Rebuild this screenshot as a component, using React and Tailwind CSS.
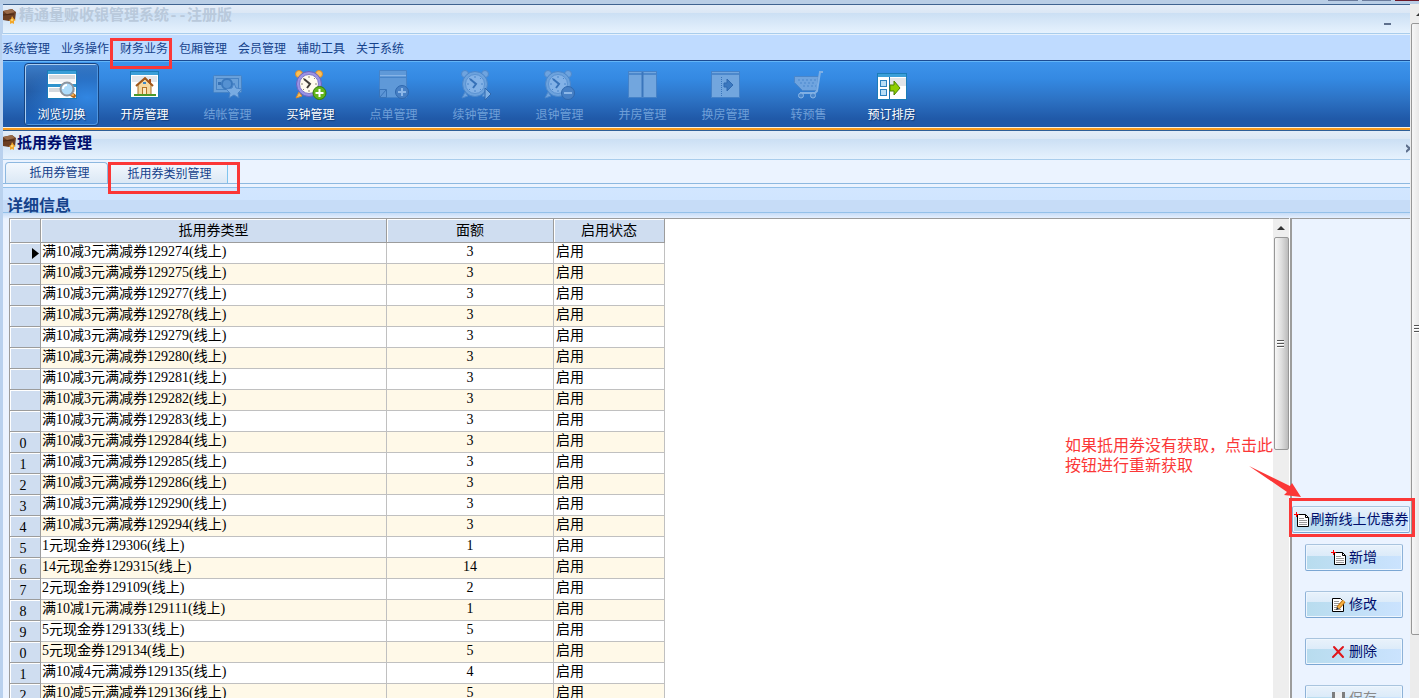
import { useState } from 'react';
import clsx from 'clsx';

const MENUS = ['系统管理', '业务操作', '财务业务', '包厢管理', '会员管理', '辅助工具', '关于系统'];

const TOOLS = [
    { name: '浏览切换', icon: BrowseIcon },
    { name: '开房管理', icon: HouseIcon },
    { name: '结帐管理', icon: CashIcon, disabled: true },
    { name: '买钟管理', icon: ClockAddIcon },
    { name: '点单管理', icon: NoteIcon, disabled: true },
    { name: '续钟管理', icon: ClockPlayIcon, disabled: true },
    { name: '退钟管理', icon: ClockMinusIcon, disabled: true },
    { name: '并房管理', icon: MergeIcon, disabled: true },
    { name: '换房管理', icon: SwapIcon, disabled: true },
    { name: '转预售', icon: CartIcon, disabled: true },
    { name: '预订排房', icon: ScheduleIcon }
];

const COUPONS = [
    ['满10减3元满减券129274(线上)', 3],
    ['满10减3元满减券129275(线上)', 3],
    ['满10减3元满减券129277(线上)', 3],
    ['满10减3元满减券129278(线上)', 3],
    ['满10减3元满减券129279(线上)', 3],
    ['满10减3元满减券129280(线上)', 3],
    ['满10减3元满减券129281(线上)', 3],
    ['满10减3元满减券129282(线上)', 3],
    ['满10减3元满减券129283(线上)', 3],
    ['满10减3元满减券129284(线上)', 3],
    ['满10减3元满减券129285(线上)', 3],
    ['满10减3元满减券129286(线上)', 3],
    ['满10减3元满减券129290(线上)', 3],
    ['满10减3元满减券129294(线上)', 3],
    ['1元现金券129306(线上)', 1],
    ['14元现金券129315(线上)', 14],
    ['2元现金券129109(线上)', 2],
    ['满10减1元满减券129111(线上)', 1],
    ['5元现金券129133(线上)', 5],
    ['5元现金券129134(线上)', 5],
    ['满10减4元满减券129135(线上)', 4],
    ['满10减5元满减券129136(线上)', 5]
];

/* ---------- Toolbar icons ---------- */

function IconBox({ children }) {
    return (
        <svg width="32" height="32" viewBox="0 0 32 32" aria-hidden="true">
            {children}
        </svg>
    );
}

function BrowseIcon() {
    return (
        <IconBox>
            <rect x="1.5" y="0.5" width="29" height="28" fill="#fff" stroke="#1b7cb8" />
            <rect x="2" y="1" width="28" height="3" fill="#3b9fd8" />
            <rect x="3" y="5" width="26" height="4" fill="#d5d9de" />
            <path d="M3 9h26v3H3z" fill="#f3f4f6" />
            <rect x="2" y="14" width="28" height="3" fill="#2f93cd" />
            <rect x="3" y="18" width="26" height="4" fill="#d5d9de" />
            <path d="M25 24l3 2" stroke="#b76a1d" strokeWidth="4" strokeLinecap="round" />
            <path d="M25 24l2 1" stroke="#f6b352" strokeWidth="2" strokeLinecap="round" />
            <circle cx="21" cy="19" r="6.5" fill="#aedcfb" stroke="#8d96a0" strokeWidth="2" />
            <path d="M17 19a4 4 0 0 1 4-4" fill="none" stroke="#fff" strokeWidth="2" />
        </IconBox>
    );
}

function HouseIcon() {
    return (
        <IconBox>
            <rect x="1.5" y="1.5" width="28" height="26" fill="#fff" stroke="#1b7cb8" />
            <rect x="2" y="2" width="27" height="3" fill="#3b9fd8" />
            <path d="M3 6h25v6H3z" fill="#e3e6ea" />
            <rect x="20" y="9" width="2" height="5" fill="#a34a1c" />
            <path d="M9 15v10h13V15l-6-6z" fill="#f6d9a0" stroke="#a8702a" />
            <path d="M7 16l9-8 8 8" fill="none" stroke="#a0571a" strokeWidth="2" />
            <rect x="13.5" y="17.5" width="4" height="8" fill="#fae9c4" stroke="#b5762a" />
            <rect x="14" y="12" width="3" height="2" fill="#3f87c7" />
            <path d="M5 25h22" stroke="#4d9a2a" strokeWidth="2" />
        </IconBox>
    );
}

function CashIcon() {
    return (
        <IconBox>
            <rect x="1.5" y="5.5" width="28" height="17" rx="1" fill="#69a0da" stroke="#4583c6" />
            <rect x="4.5" y="8.5" width="22" height="11" fill="none" stroke="#4583c6" />
            <circle cx="15" cy="14" r="5" fill="#5591d2" stroke="#3a78bd" strokeWidth="2" />
            <rect x="6" y="12" width="3" height="3" fill="#3571b6" />
            <path d="M22 13l2 5 6 1-4 4 1 5-5-3-5 3 1-5-4-4 6-1z" fill="#78abe2" stroke="#4682c7" />
        </IconBox>
    );
}

function Clock({ muted }) {
    const ear = muted ? '#6fa4df' : '#fbc054';
    const earLine = muted ? '#4e88cb' : '#d98a2b';
    return (
        <>
            <circle cx="4" cy="4" r="3.5" fill={ear} stroke={earLine} />
            <circle cx="24" cy="4" r="3.5" fill={ear} stroke={earLine} />
            <path d="M4 22l-3 6 6-2zM24 22l3 6-6-2z" fill={ear} stroke={earLine} />
            <circle cx="14" cy="14" r="12.5" fill={muted ? '#6ca2dd' : '#9a93e6'} stroke={muted ? '#4b86ca' : '#6a62bd'} />
            <circle cx="14" cy="14" r="9.5" fill={muted ? '#83b2e7' : '#fffbee'} stroke={muted ? '#5a92d2' : '#7d76c9'} />
            <path
                d="M14 6v2M14 20v2M6 14h2M20 14h2M8 8l1 1M20 8l-1 1M8 20l1-1M20 20l-1-1"
                stroke={muted ? '#4b86ca' : '#8b8678'}
            />
            <path d="M9 9l6 5-3 4" fill="none" stroke={muted ? '#3671b8' : '#3f3c37'} strokeWidth="2" />
        </>
    );
}

function ClockAddIcon() {
    return (
        <IconBox>
            <Clock />
            <circle cx="24.5" cy="23" r="6.5" fill="#63b51c" stroke="#358008" />
            <path d="M24.5 19v8M20.5 23h8" stroke="#fff" strokeWidth="2" />
        </IconBox>
    );
}

function NoteIcon() {
    return (
        <IconBox>
            <path d="M1.5.5h27v27h-20l-7-7z" fill="#5f99d8" stroke="#4683c8" />
            <path d="M2 5.5h26" stroke="#86b3e6" />
            <path d="M2 7.5h26" stroke="#4784c9" />
            <path d="M1.500 19.5h7v8h-7z" fill="#5c95d6" stroke="#3974b9" />
            <path d="M2 27l6-7" stroke="#3974b9" />
            <circle cx="24" cy="22" r="6.5" fill="#4780c5" stroke="#2f68ae" />
            <path d="M24 18v8M20 22h8" stroke="#8cb7e8" strokeWidth="2" />
        </IconBox>
    );
}

function ClockPlayIcon() {
    return (
        <IconBox>
            <Clock muted />
            <path d="M24 18l6 6-6 6z" fill="#7eafe3" stroke="#2f68ae" />
        </IconBox>
    );
}

function ClockMinusIcon() {
    return (
        <IconBox>
            <Clock muted />
            <circle cx="24" cy="23" r="6.5" fill="#4780c5" stroke="#2f68ae" />
            <path d="M20 23h8" stroke="#8cb7e8" strokeWidth="2" />
        </IconBox>
    );
}

function MergeIcon() {
    return (
        <IconBox>
            <rect x="1.5" y="1.5" width="14" height="26" fill="#72a6de" stroke="#4582c8" />
            <rect x="15.5" y="1.5" width="14" height="26" fill="#72a6de" stroke="#4582c8" />
            <path d="M2 4h13M16 4h13" stroke="#4c88cc" strokeWidth="2" />
            <path d="M15.5 2v25" stroke="#3a76bc" strokeWidth="2" />
        </IconBox>
    );
}

function SwapIcon() {
    return (
        <IconBox>
            <rect x="1.5" y="1.5" width="28" height="26" fill="#72a6de" stroke="#4582c8" />
            <path d="M2 4h27" stroke="#4c88cc" strokeWidth="2" />
            <path d="M11.5 7v19" stroke="#3a76bc" strokeDasharray="1 1" />
            <path d="M14 13h3v-4l6 6-6 6v-4h-3z" fill="#3b78bf" stroke="#2f69b0" />
        </IconBox>
    );
}

function CartIcon() {
    return (
        <IconBox>
            <path d="M1.5 6.500h24l-2 14h-14l-8-8z" fill="#6fa4df" stroke="#4a86ca" />
            <path d="M5 10h18M7 13h16M10 16h13" stroke="#5d96d6" strokeDasharray="2 2" strokeWidth="2" />
            <path d="M30 2h-3l-3 19-2 2H7" fill="none" stroke="#7fafe4" strokeWidth="2" />
            <circle cx="8" cy="25.5" r="2.5" fill="#4a86ca" stroke="#8ab6e6" />
            <circle cx="20" cy="25.5" r="2.5" fill="#4a86ca" stroke="#8ab6e6" />
        </IconBox>
    );
}

function ScheduleIcon() {
    return (
        <IconBox>
            <rect x="1.5" y="3.5" width="29" height="26" fill="#fff" stroke="#1b7cb8" />
            <rect x="2" y="4" width="28" height="3" fill="#3b9fd8" />
            <path d="M14 8h16v8H14z" fill="#e1e4e8" />
            <path d="M13.5 7v22" stroke="#1b6fae" />
            <rect x="4.5" y="10.500" width="6" height="6" fill="#b9def5" stroke="#2b82c0" />
            <rect x="4.5" y="19.500" width="6" height="6" fill="#b9def5" stroke="#2b82c0" />
            <path d="M14 15h4v-4l6 7-6 7v-4h-4z" fill="#8fce00" stroke="#4c8200" />
        </IconBox>
    );
}

/* ---------- Small icons ---------- */

function WalletIcon() {
    return (
        <svg width="14" height="16" viewBox="0 0 14 16" className="shrink-0" aria-hidden="true">
            <path d="M0 2l9-2 4 3-1 8-6 1-6-1z" fill="#6b3f24" />
            <path d="M0 2l9-2 3 3-8 2z" fill="#9a6a48" />
            <path d="M0 6l11-1" stroke="#4a2814" />
            <path d="M9 7l2 3 2 1-2 1v3l-2-1-2 1v-3l-1-1 2-1z" fill="#f3a82c" />
            <circle cx="9" cy="11" r="1" fill="#fde08a" />
        </svg>
    );
}

function NewDocIcon() {
    return (
        <svg width="16" height="16" viewBox="0 0 16 16" className="shrink-0" aria-hidden="true">
            <path d="M3.5 2.5h8l3 3v9h-11z" fill="#fff" stroke="#000" />
            <path d="M11.5 2.5v3h3" fill="none" stroke="#000" />
            <path d="M5 6.5h5M5 8.5h8M5 10.5h8M5 12.5h8" stroke="#999" />
            <path d="M0 2.5h5M2.5 0v5" stroke="#f00" />
        </svg>
    );
}

function EditIcon() {
    return (
        <svg width="16" height="16" viewBox="0 0 16 16" className="shrink-0" aria-hidden="true">
            <path d="M1.5 1.5h8l3 3v10h-11z" fill="#fff" stroke="#000" />
            <path d="M3 4.500h5M3 6.500h7M3 8.500h5M3 10.500h3M3 12.500h7" stroke="#999" />
            <path d="M13 4l-6 7" stroke="#b86f12" strokeWidth="4" />
            <path d="M13 4l-6 7" stroke="#f5b042" strokeWidth="2" />
            <path d="M5 13l1-3 2 2z" fill="#222" />
        </svg>
    );
}

function DeleteIcon() {
    return (
        <svg width="16" height="16" viewBox="0 0 16 16" className="shrink-0" aria-hidden="true">
            <path d="M3 3l9 10M12 3L2 13" fill="none" stroke="#e0161b" strokeWidth="2" strokeLinecap="round" />
        </svg>
    );
}

function SaveIcon() {
    return (
        <svg width="16" height="16" viewBox="0 0 16 16" className="shrink-0" aria-hidden="true">
            <path d="M1 1h13v14H1z" fill="#7d7d7d" />
            <path d="M4 1h7v7H4z" fill="#eef0f2" />
            <path d="M4 11h7v4H4z" fill="#c9c9c9" />
        </svg>
    );
}

function Grip() {
    return (
        <svg width="8" height="8" viewBox="0 0 8 8" className="shrink-0" aria-hidden="true">
            <path d="M0 .5h7M0 3.5h7M0 6.5h7" stroke="#555" />
            <path d="M0 1.5h7M0 4.5h7M0 7.5h7" stroke="#fff" />
        </svg>
    );
}

function UpArrow() {
    return (
        <svg width="8" height="4" viewBox="0 0 8 4" className="shrink-0" aria-hidden="true">
            <path d="M4 0l4 4H0z" fill="#333" />
        </svg>
    );
}

/* ---------- Pieces ---------- */

function ActionButton({ icon: Icon, label, disabled, wide }) {
    return (
        <button
            type="button"
            disabled={disabled}
            className={clsx(
                'flex h-[27px] shrink-0 items-center justify-center rounded-xs border border-t-[#a9c4de] border-x-[#8db2d8] border-b-[#7ba6d3] text-sm leading-5 whitespace-nowrap shadow-[inset_0_0_0_1px_#eef6fe]',
                'bg-[linear-gradient(to_bottom,#e9f2fb_0%,#dcebf9_42%,transparent_42%),linear-gradient(to_right,#b8dcee,#c3e0f8_60%,#cbe3fe)]',
                wide ? 'w-full gap-px' : 'mr-[7px] ml-[13px] gap-0.5',
                disabled ? 'text-[#8a8a8a]' : 'text-[#000e6b]'
            )}
        >
            <Icon />
            {label}
        </button>
    );
}

function CouponTable() {
    return (
        <table className="w-[656px] table-fixed border-separate border-spacing-0 text-sm text-black">
            <thead>
                <tr className="h-[25px] bg-[#cfddf0]">
                    <th className="w-8 border border-[#9c9c9c] p-0 shadow-[inset_1px_1px_0_#fff]"></th>
                    <th className="w-[346px] border-y border-r border-[#9c9c9c] p-0 leading-5 font-normal shadow-[inset_1px_1px_0_#fff]">抵用券类型</th>
                    <th className="w-[167px] border-y border-r border-[#9c9c9c] p-0 leading-5 font-normal shadow-[inset_1px_1px_0_#fff]">面额</th>
                    <th className="w-[111px] border-y border-r border-[#9c9c9c] p-0 leading-5 font-normal shadow-[inset_1px_1px_0_#fff]">启用状态</th>
                </tr>
            </thead>
            <tbody>
                {COUPONS.map(([name, amount], index) => (
                    <tr key={name} className="h-[21px] odd:bg-white even:bg-[#fff9e8]">
                        <td className="border-x border-b border-[#9c9c9c] bg-[#cfddf0] p-0 text-center leading-5 shadow-[inset_1px_1px_0_#fff]">
                            {index === 0 && (
                                <svg width="7" height="11" viewBox="0 0 7 11" className="mr-px ml-auto" aria-hidden="true">
                                    <path d="M0 0l7 5.5L0 11z" fill="#000" />
                                </svg>
                            )}
                            {index >= 9 && <span className="block h-5 pt-0.5 pr-1">{(index + 1) % 10}</span>}
                        </td>
                        <td className="border-r border-b border-[#c0c0c0] p-0 pl-px">
                            <span className="block h-5 leading-[18px]">{name}</span>
                        </td>
                        <td className="border-r border-b border-[#c0c0c0] p-0 text-center">
                            <span className="block h-5 leading-[18px]">{amount}</span>
                        </td>
                        <td className="border-r border-b border-[#c0c0c0] p-0 pl-0.5">
                            <span className="block h-5 leading-[18px]">启用</span>
                        </td>
                    </tr>
                ))}
            </tbody>
        </table>
    );
}

export default function App() {
    const [tab, setTab] = useState(1);

    return (
        <div className="flex h-screen flex-col overflow-hidden bg-[#b9d1ee] font-['Liberation_Serif','Noto_Sans_CJK_SC',sans-serif]">
            {/* bottom edge of the outer window's caption buttons */}
            <div className="flex h-1 shrink-0 items-start justify-end gap-1 bg-[#b9cee6]">
                <div className="h-px w-[30px] bg-[#6a7b9c]"></div>
                <div className="h-px w-[29px] bg-[#6a7b9c]"></div>
                <div className="h-px w-6 bg-[#6b1526]"></div>
            </div>

            <div className="flex min-h-0 flex-1 pl-[3px]">
                <main className="flex min-w-0 flex-1 flex-col border-t border-[#3f6390] bg-[#ebf3ff]">
                    <header className="flex h-[29px] shrink-0 items-center border-b border-[#a9cdec] bg-[linear-gradient(to_bottom,#e4edf8_0,#dbe7f5_8px,#cbdff4_8px,#e6f2fe_100%)] pb-1">
                        <WalletIcon />
                        <h1 className="ml-0.5 font-['Liberation_Mono','Noto_Sans_CJK_SC',monospace] text-[15px] leading-5 font-bold whitespace-nowrap text-[#b9c9db]">精通量贩收银管理系统--注册版</h1>
                        <button type="button" aria-label="最小化" className="mt-2 mr-[19px] ml-auto flex h-4 w-[7px] items-end pb-1">
                            <span className="h-0.5 w-full bg-[#5d6f8c]"></span>
                        </button>
                    </header>

                    <nav className="-ml-px flex h-[26px] shrink-0 items-center gap-[11px] border-t border-[#e6f1fd] bg-[#bfdbff] pt-0.5">
                        {MENUS.map(menu => (
                            <div key={menu} className="relative">
                                <button type="button" className="block text-xs leading-5 whitespace-nowrap text-[#15428b]">{menu}</button>
                                {menu === '财务业务' && (
                                    <div className="pointer-events-none absolute -top-px -left-2.5 z-10 h-[31px] w-[62px] border-3 border-[#fb3737]"></div>
                                )}
                            </div>
                        ))}
                    </nav>

                    <div className="flex shrink-0 gap-2 border-t border-[#1c4c93] bg-[linear-gradient(to_bottom,#3d94ec_0,#3489e2_18px,#2d73c5_38px,#2059a8_58px,#2059a8_100%)] pt-0.5 pb-px pl-[21px] shadow-[inset_0_1px_0_#63b5f7]">
                        {TOOLS.map(({ name, icon: Icon, disabled }, index) => (
                            <button
                                key={name}
                                type="button"
                                disabled={disabled}
                                className={clsx(
                                    'flex h-[63px] w-[75px] flex-col items-center rounded-sm border pt-1.5 text-xs leading-5 whitespace-nowrap',
                                    index === 0
                                        ? 'border-[#164481] bg-[radial-gradient(ellipse_at_85%_55%,#3186e2_0%,#2a73c8_35%,transparent_75%),linear-gradient(to_bottom,#3c7dc8_0%,#2258a0_45%,#1c65c0_100%)] shadow-[inset_1px_1px_0_#a9cdf2,inset_-1px_-1px_0_#4f96e0]'
                                        : 'border-transparent',
                                    disabled ? 'text-[#6f9fd8]' : 'text-white [text-shadow:1px_1px_1px_#123a75]'
                                )}
                            >
                                <Icon />
                                <span className="mt-[3px]">{name}</span>
                            </button>
                        ))}
                    </div>
                    <div className="h-1 shrink-0 border-t border-b border-t-[#fdf3df] border-b-[#2f5f97] bg-[#f79b1e]"></div>

                    <header className="flex h-[29px] shrink-0 items-start border-b border-[#a9cdec] bg-[linear-gradient(to_bottom,#e4edf8_0,#dbe7f5_8px,#cbdff4_8px,#e6f2fe_100%)] pt-0.5">
                        <div className="pt-0.5"><WalletIcon /></div>
                        <h2 className="text-[15px] leading-5 font-bold whitespace-nowrap text-[#000e6b]">抵用券管理</h2>
                        <button type="button" aria-label="关闭" className="mt-2.5 ml-auto h-2.5 w-1 overflow-hidden">
                            <svg width="8" height="9" viewBox="0 0 8 9" aria-hidden="true">
                                <path d="M0 1l7 7M7 1L0 8" stroke="#5d6f8c" strokeWidth="2" />
                            </svg>
                        </button>
                    </header>

                    <div role="tablist" className="flex h-6 shrink-0 items-end border-b border-[#8db8e0] bg-[#ebf3ff] pl-0.5">
                        <button
                            type="button"
                            role="tab"
                            aria-selected={tab === 0}
                            onClick={() => setTab(0)}
                            className="h-[21px] w-[103px] rounded-t-sm border border-b-0 border-[#8db8e0] bg-linear-to-b from-[#f3f8fe] to-[#dbe8f5] pl-1.5 text-xs leading-4 whitespace-nowrap text-[#15428b]"
                        >
                            抵用券管理
                        </button>
                        <div className="relative">
                            <button
                                type="button"
                                role="tab"
                                aria-selected={tab === 1}
                                onClick={() => setTab(1)}
                                className="block h-[21px] w-[120px] border-t border-r border-t-[#8db8e0] border-r-[#7fc4ee] bg-linear-to-b from-[#f3f8fe] to-[#dbe8f5] pt-px pl-1 text-xs leading-4 whitespace-nowrap text-[#15428b]"
                            >
                                抵用券类别管理
                            </button>
                            <div className="pointer-events-none absolute top-0 left-0 z-10 h-8 w-[132px] border-3 border-[#fb3737]"></div>
                        </div>
                    </div>

                    <h3 className="mt-[3px] h-[26px] shrink-0 border-t border-b border-[#93c0e9] bg-[linear-gradient(to_bottom,#d2e6ff_0%,#d0e5ff_50%,#c6dcf7_50%,#c6dcf7_100%)] pt-2 pl-1 text-base leading-5 font-bold text-[#15428b]">
                        详细信息
                    </h3>

                    <section className="relative flex min-h-0 flex-1 bg-linear-to-b from-[#c6dcf7] to-[#ebf3ff] to-[6px] pt-[5px]">
                        <div className="ml-1.5 flex min-w-0 flex-1 overflow-hidden bg-white">
                            <div className="flex-1 border-t border-[#9c9c9c]">
                                <div className="-mt-px">
                                    <CouponTable />
                                </div>
                            </div>
                            <div className="flex w-4 flex-col items-center border-t border-[#9c9c9c] bg-[#eeeeee]">
                                <div className="flex h-[18px] shrink-0 items-center"><UpArrow /></div>
                                <div className="flex h-[213px] w-[15px] shrink-0 items-center justify-center rounded-xs border border-[#979797] bg-linear-to-r from-[#f7f7f7] via-[#dedede] to-[#bcbcbc]">
                                    <Grip />
                                </div>
                            </div>
                            <div className="w-px"></div>
                        </div>

                        <aside className="flex w-[120px] shrink-0 flex-col gap-5 border-t border-l-2 border-[#9c9c9c] bg-[#ebf3ff] pt-[287px]">
                            <div className="relative -mb-[9px] shrink-0">
                                <ActionButton icon={NewDocIcon} label="刷新线上优惠券" wide />
                                <div className="pointer-events-none absolute -top-2 -left-[3px] z-20 h-[39px] w-[126px] border-3 border-[#fb3737]"></div>
                            </div>
                            <ActionButton icon={NewDocIcon} label="新增" />
                            <ActionButton icon={EditIcon} label="修改" />
                            <ActionButton icon={DeleteIcon} label="删除" />
                            <ActionButton icon={SaveIcon} label="保存" disabled />
                        </aside>

                        {/* callout pointing at the refresh button */}
                        <div className="pointer-events-none absolute top-[223px] right-[109px] z-10 w-[236px] text-[#fb3737]">
                            <p className="text-base leading-5 whitespace-nowrap">
                                如果抵用券没有获取，点击此
                                <br />
                                按钮进行重新获取
                            </p>
                            <svg width="54" height="32" viewBox="0 0 54 32" className="-mt-2.5 ml-[184px]" aria-hidden="true">
                                <path d="M0 0l41 20 2-3 9 14-17-2 3-3z" fill="#fb3737" />
                            </svg>
                        </div>
                    </section>
                </main>

                {/* outer scrollbar, cut off by the window edge */}
                <div className="flex w-[9px] shrink-0 flex-col overflow-hidden bg-[#ececec]">
                    <div className="flex h-[19px] shrink-0 items-center pl-1.5"><UpArrow /></div>
                    <div className="ml-px flex h-[612px] w-4 shrink-0 items-center rounded-l-xs border border-[#979797] bg-linear-to-r from-[#f7f7f7] to-[#d8d8d8] pl-0.5">
                        <Grip />
                    </div>
                </div>
            </div>
        </div>
    );
}
